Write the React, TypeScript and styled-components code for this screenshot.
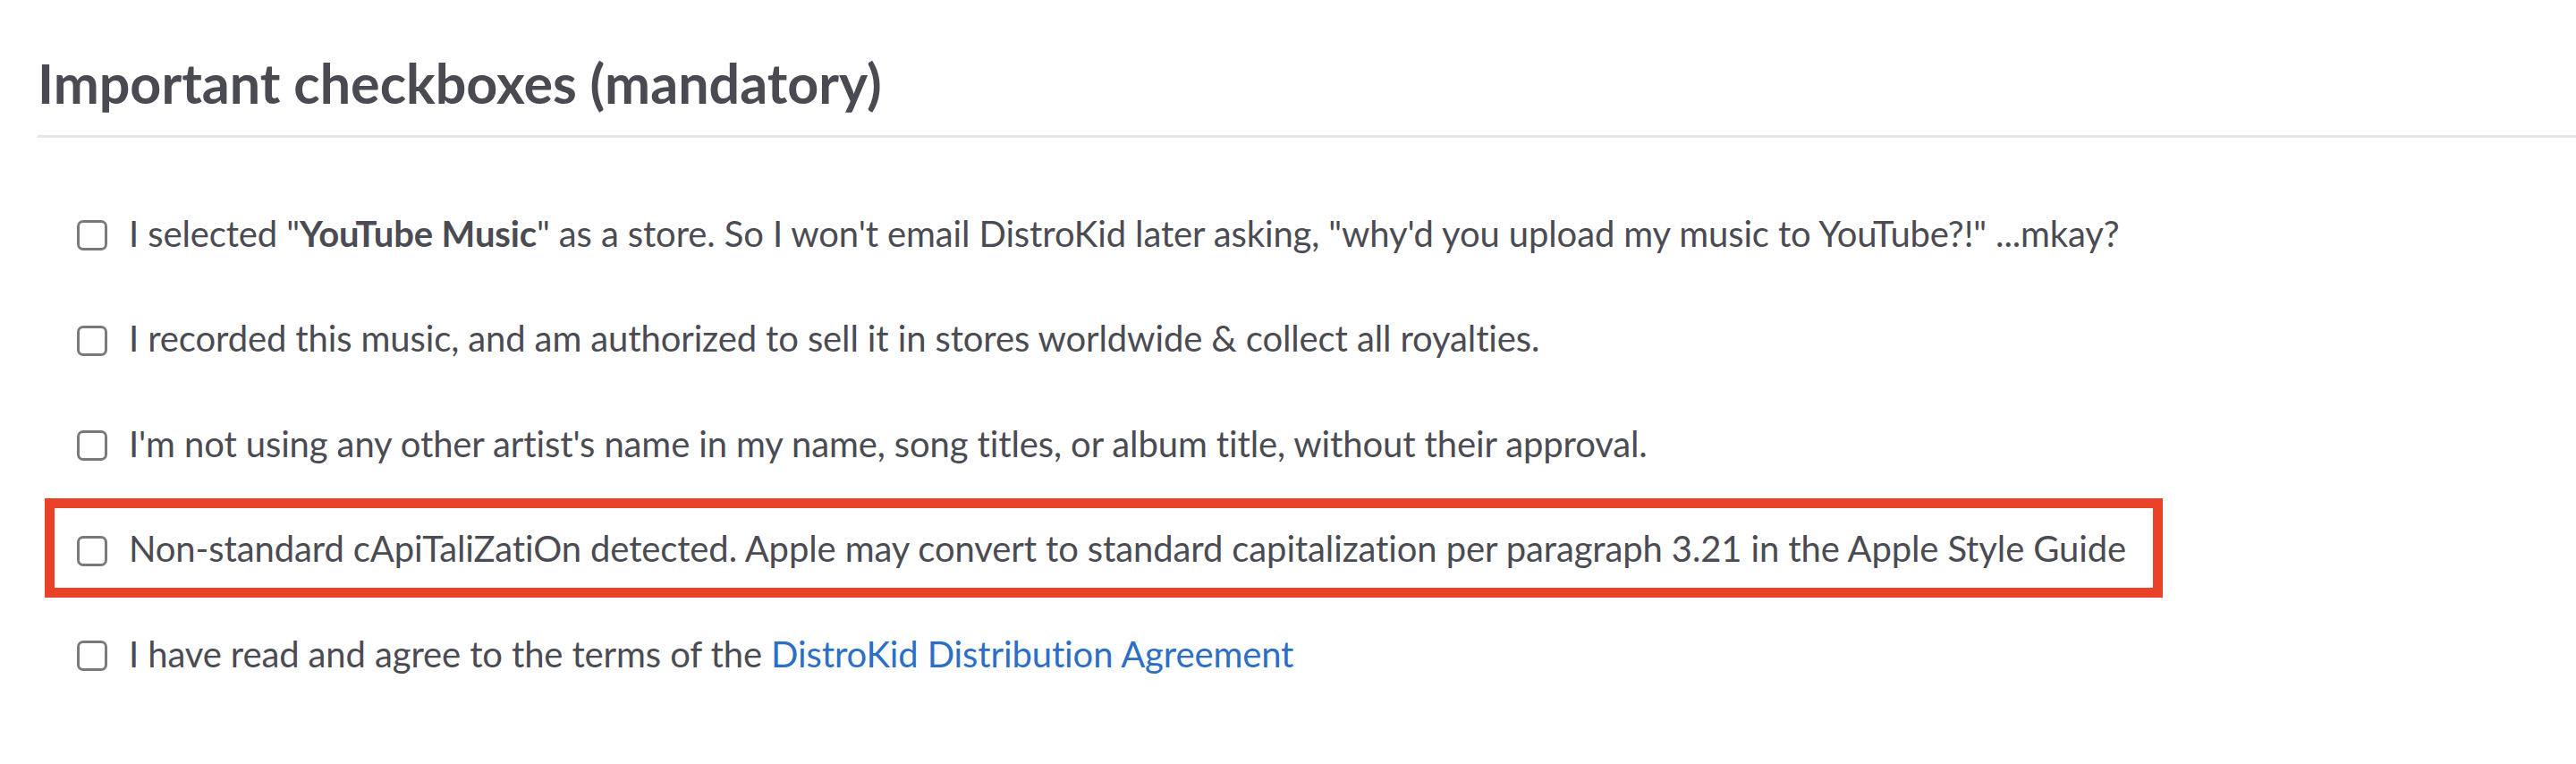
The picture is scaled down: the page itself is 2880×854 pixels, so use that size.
import React from "react";
import styled, {createGlobalStyle} from "styled-components";

const GlobalStyle = createGlobalStyle`
  html, body {
    margin: 0;
    padding: 0;
    background: #ffffff;
  }
  body {
    font-family: Lato, "Noto Sans", sans-serif;
    color: #4b4b53;
    font-variant-ligatures: no-common-ligatures;
  }
`;

const Section = styled.section`
  padding: 0 0 0 42px;
`;

const Title = styled.h2`
  margin: 0;
  padding: 57px 0 22px 0;
  font-size: 61px;
  line-height: 72px;
  font-weight: 700;
  color: #4a4b52;
  border-bottom: 3px solid #e6e6ea;
`;

const List = styled.div`
  display: flex;
  flex-direction: column;
  align-items: flex-start;
  gap: 61.5px;
  padding: 78.5px 0 0 44px;
`;

const Row = styled.div<{$highlight?: boolean}>`
  display: flex;
  align-items: flex-start;
  gap: 24px;
  ${(p) =>
    p.$highlight &&
    `
    border: 11px solid #ea4129;
    padding: 17px 30px 16px 25.5px;
    margin: -28px 0 -27px -36.5px;
  `}
`;

const Box = styled.input`
  appearance: none;
  flex: none;
  width: 34px;
  height: 34px;
  margin: 13.5px 0 0 0;
  border: 3px solid #7a7a7a;
  border-radius: 7px;
  background: #ffffff;
`;

const Label = styled.label`
  font-size: 40px;
  line-height: 56px;
  letter-spacing: -0.12px;
  color: #4b4b53;
  white-space: nowrap;
`;

const Strong = styled.b`
  font-weight: 700;
`;

const Link = styled.a`
  color: #2d6fc7;
  text-decoration: none;
`;

type Item = {
  id: string;
  content: React.ReactNode;
  highlight?: boolean;
};

const items: Item[] = [
  {
    id: "youtube",
    content: (
      <>
        I selected "<Strong>YouTube Music</Strong>" as a store. So I won't email DistroKid later asking, "why'd you upload my
        music to YouTube?!" ...mkay?
      </>
    ),
  },
  {
    id: "recorded",
    content: <>I recorded this music, and am authorized to sell it in stores worldwide &amp; collect all royalties.</>,
  },
  {
    id: "names",
    content: <>I'm not using any other artist's name in my name, song titles, or album title, without their approval.</>,
  },
  {
    id: "caps",
    highlight: true,
    content: (
      <>
        Non-standard cApiTaliZatiOn detected. Apple may convert to standard capitalization per paragraph 3.21 in the Apple
        Style Guide
      </>
    ),
  },
  {
    id: "terms",
    content: (
      <>
        I have read and agree to the terms of the <Link href="#">DistroKid Distribution Agreement</Link>
      </>
    ),
  },
];

export default function App() {
  return (
    <>
      <GlobalStyle />
      <Section>
        <Title>Important checkboxes (mandatory)</Title>
        <List>
          {items.map((item) => (
            <Row key={item.id} $highlight={item.highlight}>
              <Box type="checkbox" id={item.id} />
              <Label htmlFor={item.id}>{item.content}</Label>
            </Row>
          ))}
        </List>
      </Section>
    </>
  );
}
